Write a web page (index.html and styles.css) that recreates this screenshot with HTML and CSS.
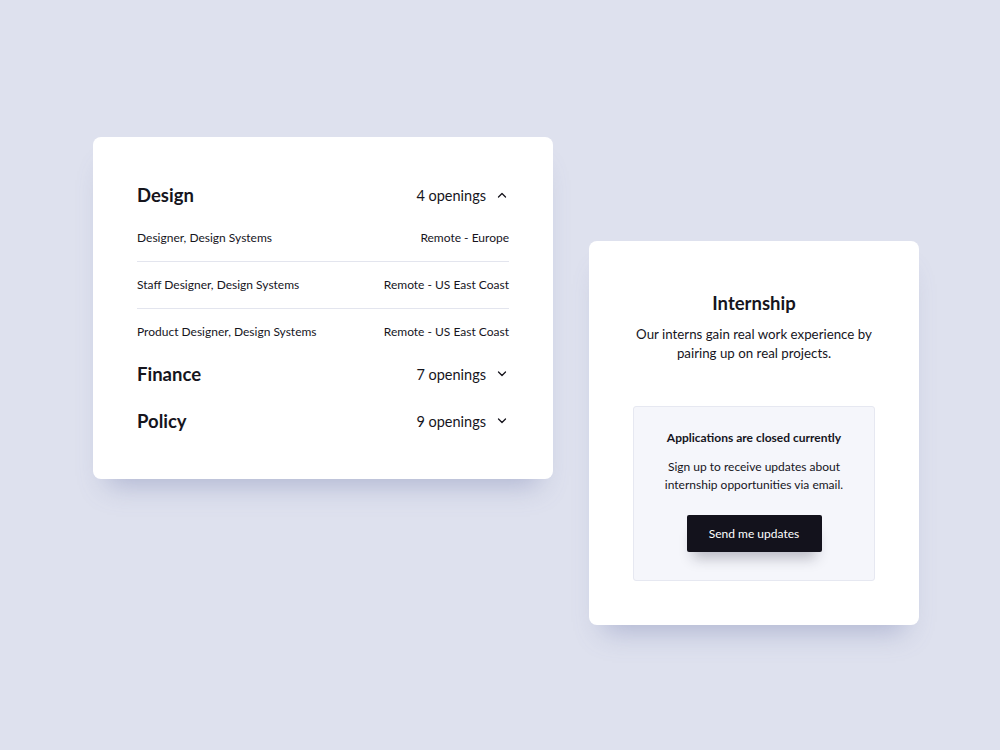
FILE: index.html
```html
<!DOCTYPE html>
<html lang="en">

<head>
  <meta charset="UTF-8">
  <meta name="viewport" content="width=device-width, initial-scale=1.0">
  <title>Careers</title>
  <link rel="stylesheet" href="styles.css">
</head>

<body>
  <div class="page">
    <div class="card jobs">
      <div class="group open">
        <div class="group-head">
          <h2>Design</h2>
          <span class="count">4 openings
            <svg class="chev" viewBox="0 0 10 6" width="10" height="6"><polyline points="1.5,5 5,1.5 8.5,5" /></svg>
          </span>
        </div>
        <ul class="roles">
          <li><span>Designer, Design Systems</span><span>Remote - Europe</span></li>
          <li><span>Staff Designer, Design Systems</span><span>Remote - US East Coast</span></li>
          <li><span>Product Designer, Design Systems</span><span>Remote - US East Coast</span></li>
        </ul>
      </div>
      <div class="group">
        <div class="group-head">
          <h2>Finance</h2>
          <span class="count">7 openings
            <svg class="chev" viewBox="0 0 10 6" width="10" height="6"><polyline points="1.5,1 5,4.5 8.5,1" /></svg>
          </span>
        </div>
      </div>
      <div class="group">
        <div class="group-head">
          <h2>Policy</h2>
          <span class="count">9 openings
            <svg class="chev" viewBox="0 0 10 6" width="10" height="6"><polyline points="1.5,1 5,4.5 8.5,1" /></svg>
          </span>
        </div>
      </div>
    </div>

    <div class="card intern">
      <h2>Internship</h2>
      <p class="lead">Our interns gain real work experience by<br>pairing up on real projects.</p>
      <div class="notice">
        <h3>Applications are closed currently</h3>
        <p>Sign up to receive updates about<br>internship opportunities via email.</p>
        <button class="btn">Send me updates</button>
      </div>
    </div>
  </div>
</body>
</html>
```

FILE: styles.css
```css
html, body {
  margin: 0;
  padding: 0;
  height: 100%;
  background-color: #dee1ee;
  font-family: "Lato", "Open Sans", sans-serif;
  color: #16151d;
}

.page {
  display: flex;
  align-items: flex-start;
  gap: 36px;
  padding: 137px 0 0 93px;
}

.card {
  background: #fff;
  border-radius: 8px;
  box-sizing: border-box;
  box-shadow: 0 20px 26px -14px rgba(110, 118, 170, 0.42);
}

/* job list */
.jobs {
  width: 460px;
  padding: 44px;
  display: flex;
  flex-direction: column;
  gap: 19px;
}

.group-head {
  display: flex;
  justify-content: space-between;
  align-items: center;
  height: 28px;
}

.group-head h2 {
  margin: 0;
  font-size: 18.5px;
  font-weight: 700;
}

.count {
  display: flex;
  align-items: center;
  gap: 11px;
  font-size: 14.5px;
}

.chev {
  fill: none;
  stroke: #16151d;
  stroke-width: 1.3;
  stroke-linecap: round;
  stroke-linejoin: round;
  margin-right: 2px;
}

.roles {
  list-style: none;
  margin: 6px 0 -14px;
  padding: 0;
}

.roles li {
  display: flex;
  justify-content: space-between;
  font-size: 12px;
  line-height: 18px;
  padding: 14px 0;
  border-bottom: 1px solid #e3e5ee;
}

.roles li:last-child {
  border-bottom: none;
}

/* internship card */
.intern {
  width: 330px;
  margin-top: 104px;
  padding: 48px 44px 44px;
  text-align: center;
}

.intern h2 {
  margin: 0;
  font-size: 18.5px;
  font-weight: 700;
  line-height: 28px;
}

.lead {
  margin: 8px -10px 43px;
  font-size: 13.3px;
  line-height: 19px;
  white-space: nowrap;
}

.notice {
  background: #f5f6fb;
  border: 1px solid #e6e8f1;
  border-radius: 3px;
  padding: 23px 0 28px;
}

.notice h3 {
  margin: 0;
  font-size: 12px;
  font-weight: 700;
  line-height: 16px;
}

.notice p {
  margin: 12px 0 21px;
  font-size: 12px;
  line-height: 18px;
}

.btn {
  width: 135px;
  height: 37px;
  border: none;
  border-radius: 2px;
  background: #13121c;
  color: #fff;
  font-family: inherit;
  font-size: 12px;
  cursor: pointer;
  box-shadow: 0 12px 14px -6px rgba(30, 30, 50, 0.28);
}
```
